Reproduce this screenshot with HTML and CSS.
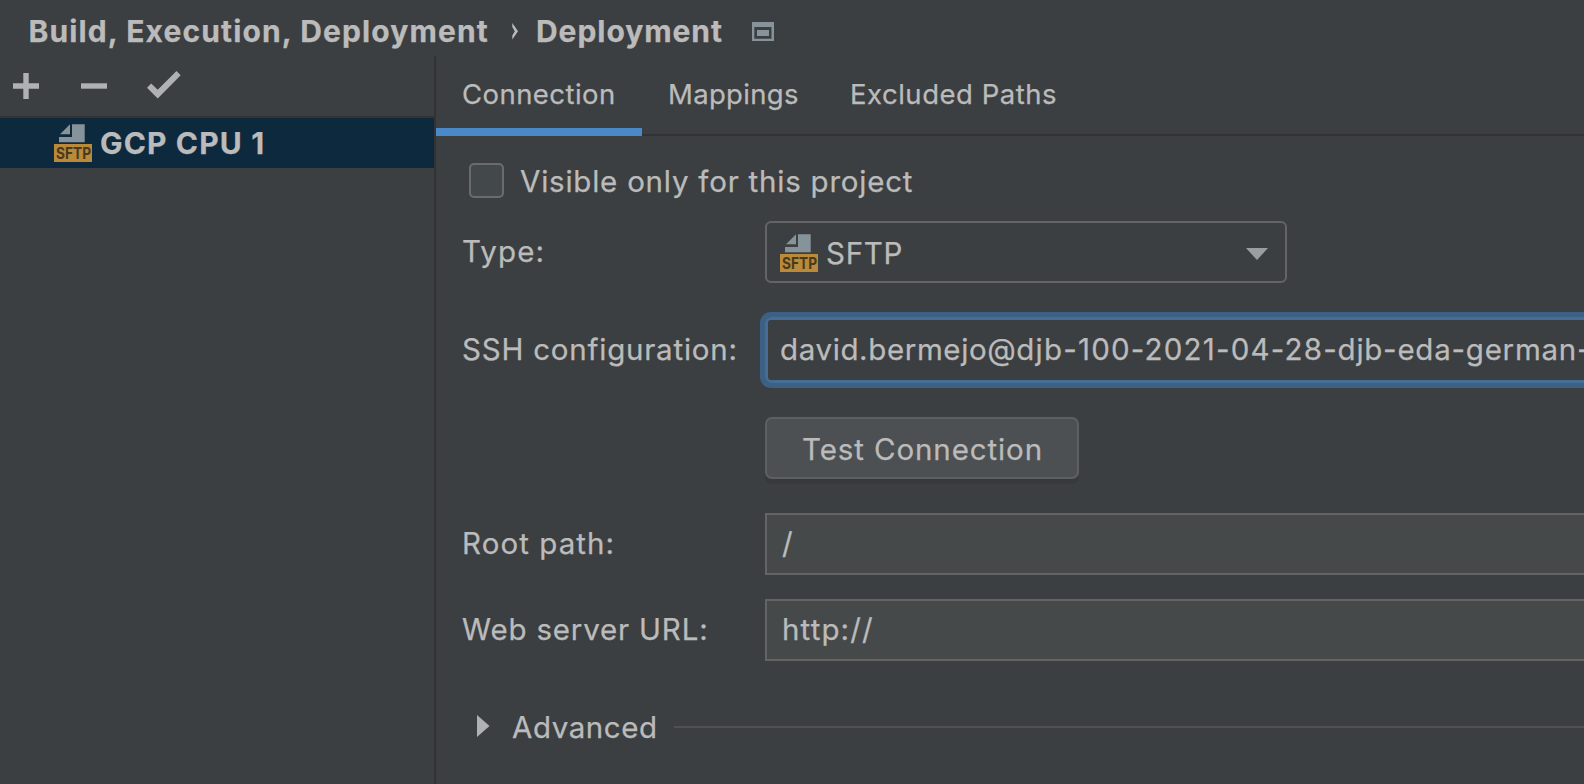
FILE: index.html
```html
<!DOCTYPE html>
<html lang="en">
<head>
<meta charset="utf-8">
<title>Deployment</title>
<link rel="stylesheet" href="styles.css">
</head>
<body>
<div class="app">
  <header class="crumbs">
    <span class="crumb">Build, Execution, Deployment</span>
    <svg class="sep" width="6" height="17" viewBox="0 0 6 17"><path d="M.3 0 6 8.3.3 16.6V12.600L2.800 8.300.3 4z" fill="#bbb"/></svg>
    <span class="crumb last">Deployment</span>
    <svg class="scope" width="22" height="19" viewBox="0 0 22 19"><path fill="#87939a" fill-rule="evenodd" d="M0 0h22v19H0zM2.300 5v11.700h17.200V5z"/><path fill="#87939a" d="M5 8h12v6H5z"/></svg>
  </header>
  <div class="body">
    <aside class="side">
      <div class="tools">
        <svg width="26" height="26" viewBox="0 0 26 26"><path fill="#afb1b3" d="M10.300 0h5.400v10.300H26v5.400H15.700V26h-5.400V15.700H0v-5.400h10.300z"/></svg>
        <svg class="minus" width="26" height="6" viewBox="0 0 26 6"><path fill="#afb1b3" d="M0 .3h26v5.400H0z"/></svg>
        <svg class="check" width="34" height="28" viewBox="0 0 34 28"><path fill="#afb1b3" d="M0 16.700 4.200 12.500l6.500 6.300L29.500 0l4.200 4.200L10.700 27.500z"/></svg>
      </div>
      <div class="server">
        <svg class="sftp" width="38" height="38" viewBox="0 0 38 38"><path fill="#87939a" d="M6 10.300 16 .3v10zM18 .3h12.700v18H5v-5.300h13z"/><path fill="#b88a3a" d="M0 20h38v18H0z"/><text x="2" y="35" textLength="35" lengthAdjust="spacingAndGlyphs" class="badge-text">SFTP</text></svg>
        <span>GCP CPU 1</span>
      </div>
    </aside>
    <main class="panel">
      <nav class="tabs">
        <a class="tab active">Connection</a>
        <a class="tab mappings">Mappings</a>
        <a class="tab excluded">Excluded Paths</a>
      </nav>
      <form class="form">
        <div class="row visible"><span class="box"></span><span class="t-visible">Visible only for this project</span></div>
        <div class="row type">
          <label>Type:</label>
          <div class="combo">
            <svg class="sftp" width="38" height="38" viewBox="0 0 38 38"><path fill="#87939a" d="M6 10.300 16 .3v10zM18 .3h12.700v18H5v-5.300h13z"/><path fill="#b88a3a" d="M0 20h38v18H0z"/><text x="2" y="35" textLength="35" lengthAdjust="spacingAndGlyphs" class="badge-text">SFTP</text></svg>
            <span>SFTP</span>
            <svg class="arrow" width="22" height="12" viewBox="0 0 22 12"><path fill="#9a9da1" d="M0 0h22L11 12z"/></svg>
          </div>
        </div>
        <div class="row ssh">
          <label>SSH configuration:</label>
          <div class="focus"><span class="user">david.bermejo@</span><span class="date">djb-100-2021-04-28</span>-djb-eda-german-</div>
        </div>
        <div class="row test"><div class="button">Test Connection</div></div>
        <div class="row root"><label>Root path:</label><div class="field">/</div></div>
        <div class="row web"><label>Web server URL:</label><div class="field">http://</div></div>
        <div class="row advanced">
          <svg width="13" height="22" viewBox="0 0 13 22"><path fill="#afb1b3" d="M0 0l12.500 11L0 22z"/></svg>
          <span>Advanced</span><i class="rule"></i>
        </div>
      </form>
    </main>
  </div>
</div>
</body>
</html>
```
FILE: styles.css
```css
* { box-sizing: border-box; }
body {
  margin: 0;
  background: #3c3f41;
  color: #bbb;
  font: 29.5px/36px Inter, sans-serif;
  letter-spacing: .9px;
  white-space: nowrap;
  -webkit-text-stroke: .25px #bbb;
}
svg { flex: none; }
.sftp { overflow: visible; }
.badge-text { font: 700 16px Inter, sans-serif; letter-spacing: 0; fill: #4a3a1d; -webkit-text-stroke: 0; }
.app { height: 784px; display: flex; flex-direction: column; overflow: hidden; }

.crumbs {
  height: 56px;
  padding: 7px 0 0 28.500px;
  display: flex;
  align-items: center;
  font-size: 30px;
  font-weight: 700;
  letter-spacing: 1.120px;
}
.crumb { width: 483.500px; padding-bottom: 2px; }
.sep { margin-right: 18px; }
.crumb.last { width: 216px; letter-spacing: .95px; }

.body { flex: 1; display: flex; min-height: 0; }
.side { width: 436px; border-right: 2px solid #323232; }
.tools {
  height: 62px;
  padding-left: 13px;
  display: flex;
  align-items: center;
  border-bottom: 2px solid #323232;
}
.minus { margin-left: 42px; }
.check { margin: 0 0 2px 40px; }
.server {
  height: 50px;
  padding-left: 54px;
  display: flex;
  align-items: center;
  background: #0d293e;
  font-size: 30px;
  font-weight: 700;
  letter-spacing: 1.150px;
}
.server span { margin-left: 8px; padding-bottom: 1px; }

.panel { flex: 1; min-width: 0; overflow: hidden; }
.tabs {
  height: 80px;
  display: flex;
  border-bottom: 2px solid #323232;
  font-size: 27.500px;
  line-height: 76px;
  letter-spacing: .45px;
}
.tab { height: 80px; padding-left: 26px; }
.active { width: 206px; border-bottom: 8px solid #4a88c7; }
.mappings { width: 182px; letter-spacing: .33px; }
.excluded { letter-spacing: .52px; }

.form { padding-left: 26px; }
.row { display: flex; align-items: center; height: 62px; }
label { width: 303px; flex: none; padding-bottom: 2px; }
.visible { height: 36px; margin-top: 26px; padding-left: 7px; }
.box { width: 35px; height: 35px; margin-right: 16px; border: 2px solid #6b6b6b; border-radius: 5px; background: #43494a; }
.t-visible { padding-top: 1px; letter-spacing: .78px; }
.type { margin-top: 23px; }
.type label { letter-spacing: 1.100px; }
.combo {
  width: 522px;
  height: 62px;
  padding: 0 17px 0 13px;
  display: flex;
  align-items: center;
  border: 2px solid #646464;
  border-radius: 6px;
}
.combo .sftp { margin-top: 2px; }
.combo span { margin-left: 8px; padding-top: 1px; letter-spacing: .7px; }
.arrow { margin-left: auto; margin-top: 4px; }
.ssh { height: 66px; margin-top: 34px; }
.ssh label { letter-spacing: .78px; }
.focus, .field { flex: 1; margin-right: -60px; }
.focus {
  height: 66px;
  padding-left: 12px;
  line-height: 59px;
  letter-spacing: .750px;
  border: 3px solid #466d94;
  border-radius: 6px;
  box-shadow: 0 0 0 5px #3d6185;
}
.user { letter-spacing: .62px; }
.date { letter-spacing: 1.200px; }
.test { margin-top: 34px; padding-left: 303px; }
.button {
  width: 314px;
  height: 62px;
  padding-left: 35px;
  line-height: 61px;
  letter-spacing: .900px;
  border: 2px solid #5e6060;
  border-radius: 7px;
  background: #4c5052;
  box-shadow: 0 5px 0 #37393a;
}
.root { margin-top: 34px; }
.root label { letter-spacing: 1.080px; }
.field {
  height: 62px;
  padding-left: 15px;
  line-height: 57px;
  letter-spacing: 1.130px;
  border: 2px solid #646464;
  background: #45494a;
}
.web { margin-top: 24px; }
.web label { letter-spacing: .82px; }
.advanced { height: 36px; margin-top: 48px; padding-left: 15px; }
.advanced svg { margin-bottom: 2px; }
.advanced span { width: 162px; margin-left: 22px; letter-spacing: .57px; }
.rule { flex: 1; height: 2px; background: #515151; }
```
